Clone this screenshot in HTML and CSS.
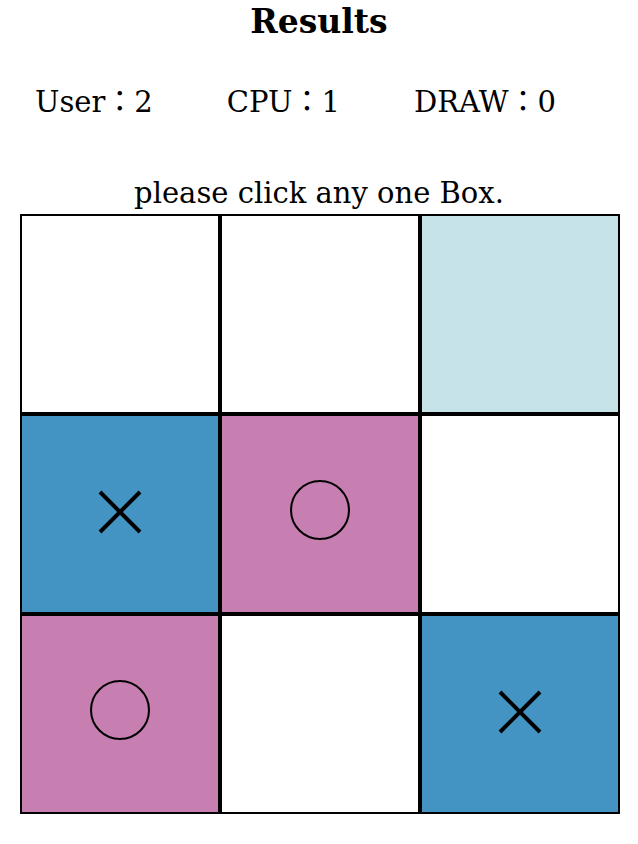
FILE: index.html
```html
<!DOCTYPE html>
<html lang="en">
<head>
    <meta charset="UTF-8">
    <meta name="viewport" content="width=device-width, initial-scale=1.0">
    <title>Tic Tac Toe</title>
    <link rel="stylesheet" href="styles.css">
</head>
<body>
<h1 class="title">Results</h1>
<div class="scores">
    <span class="score">User：2</span>
    <span class="score">CPU：1</span>
    <span class="score">DRAW：0</span>
</div>
<p class="message">please click any one Box.</p>
<div class="board">
    <div class="box"></div>
    <div class="box"></div>
    <div class="box hover"></div>

    <div class="box user">
        <svg class="mark-x" viewBox="0 0 44 44"><path d="M2 2 L42 42 M42 2 L2 42" /></svg>
    </div>
    <div class="box cpu">
        <svg class="mark-o" viewBox="0 0 62 62"><circle cx="31" cy="31" r="29" /></svg>
    </div>
    <div class="box"></div>

    <div class="box cpu">
        <svg class="mark-o" viewBox="0 0 62 62"><circle cx="31" cy="31" r="29" /></svg>
    </div>
    <div class="box"></div>
    <div class="box user">
        <svg class="mark-x" viewBox="0 0 44 44"><path d="M2 2 L42 42 M42 2 L2 42" /></svg>
    </div>
</div>
</body>
</html>
```

FILE: styles.css
```css
body {
    margin: 0;
    font-family: "DejaVu Serif", "Noto Sans CJK JP", serif;
    color: #000000;
    background-color: #ffffff;
}

.title {
    margin: 0;
    padding-top: 2px;
    text-align: center;
    font-size: 33px;
    line-height: 40px;
    font-weight: 900;
}

.scores {
    display: flex;
    gap: 74px;
    padding-left: 35px;
    margin-top: 40px;
    font-size: 29px;
    line-height: 40px;
}

.message {
    margin: 56px 0 6px;
    text-align: center;
    font-size: 29px;
    line-height: 30px;
}

.board {
    display: grid;
    grid-template-columns: repeat(3, 200px);
    grid-template-rows: repeat(3, 200px);
    width: 600px;
    margin: 0 20px;
}

.box {
    box-sizing: border-box;
    border: 2px solid #000000;
    display: flex;
    align-items: center;
    justify-content: center;
    background-color: #ffffff;
}

.box.hover {
    background-color: #c7e3ea;
}

.box.user {
    background-color: #4393c3;
}

.box.cpu {
    background-color: #c77eb1;
}

.mark-x {
    width: 44px;
    height: 44px;
    margin-bottom: 4px;
    fill: none;
    stroke: #000000;
    stroke-width: 4;
}

.mark-o {
    width: 62px;
    height: 62px;
    margin-bottom: 8px;
    fill: none;
    stroke: #000000;
    stroke-width: 2;
}
```
